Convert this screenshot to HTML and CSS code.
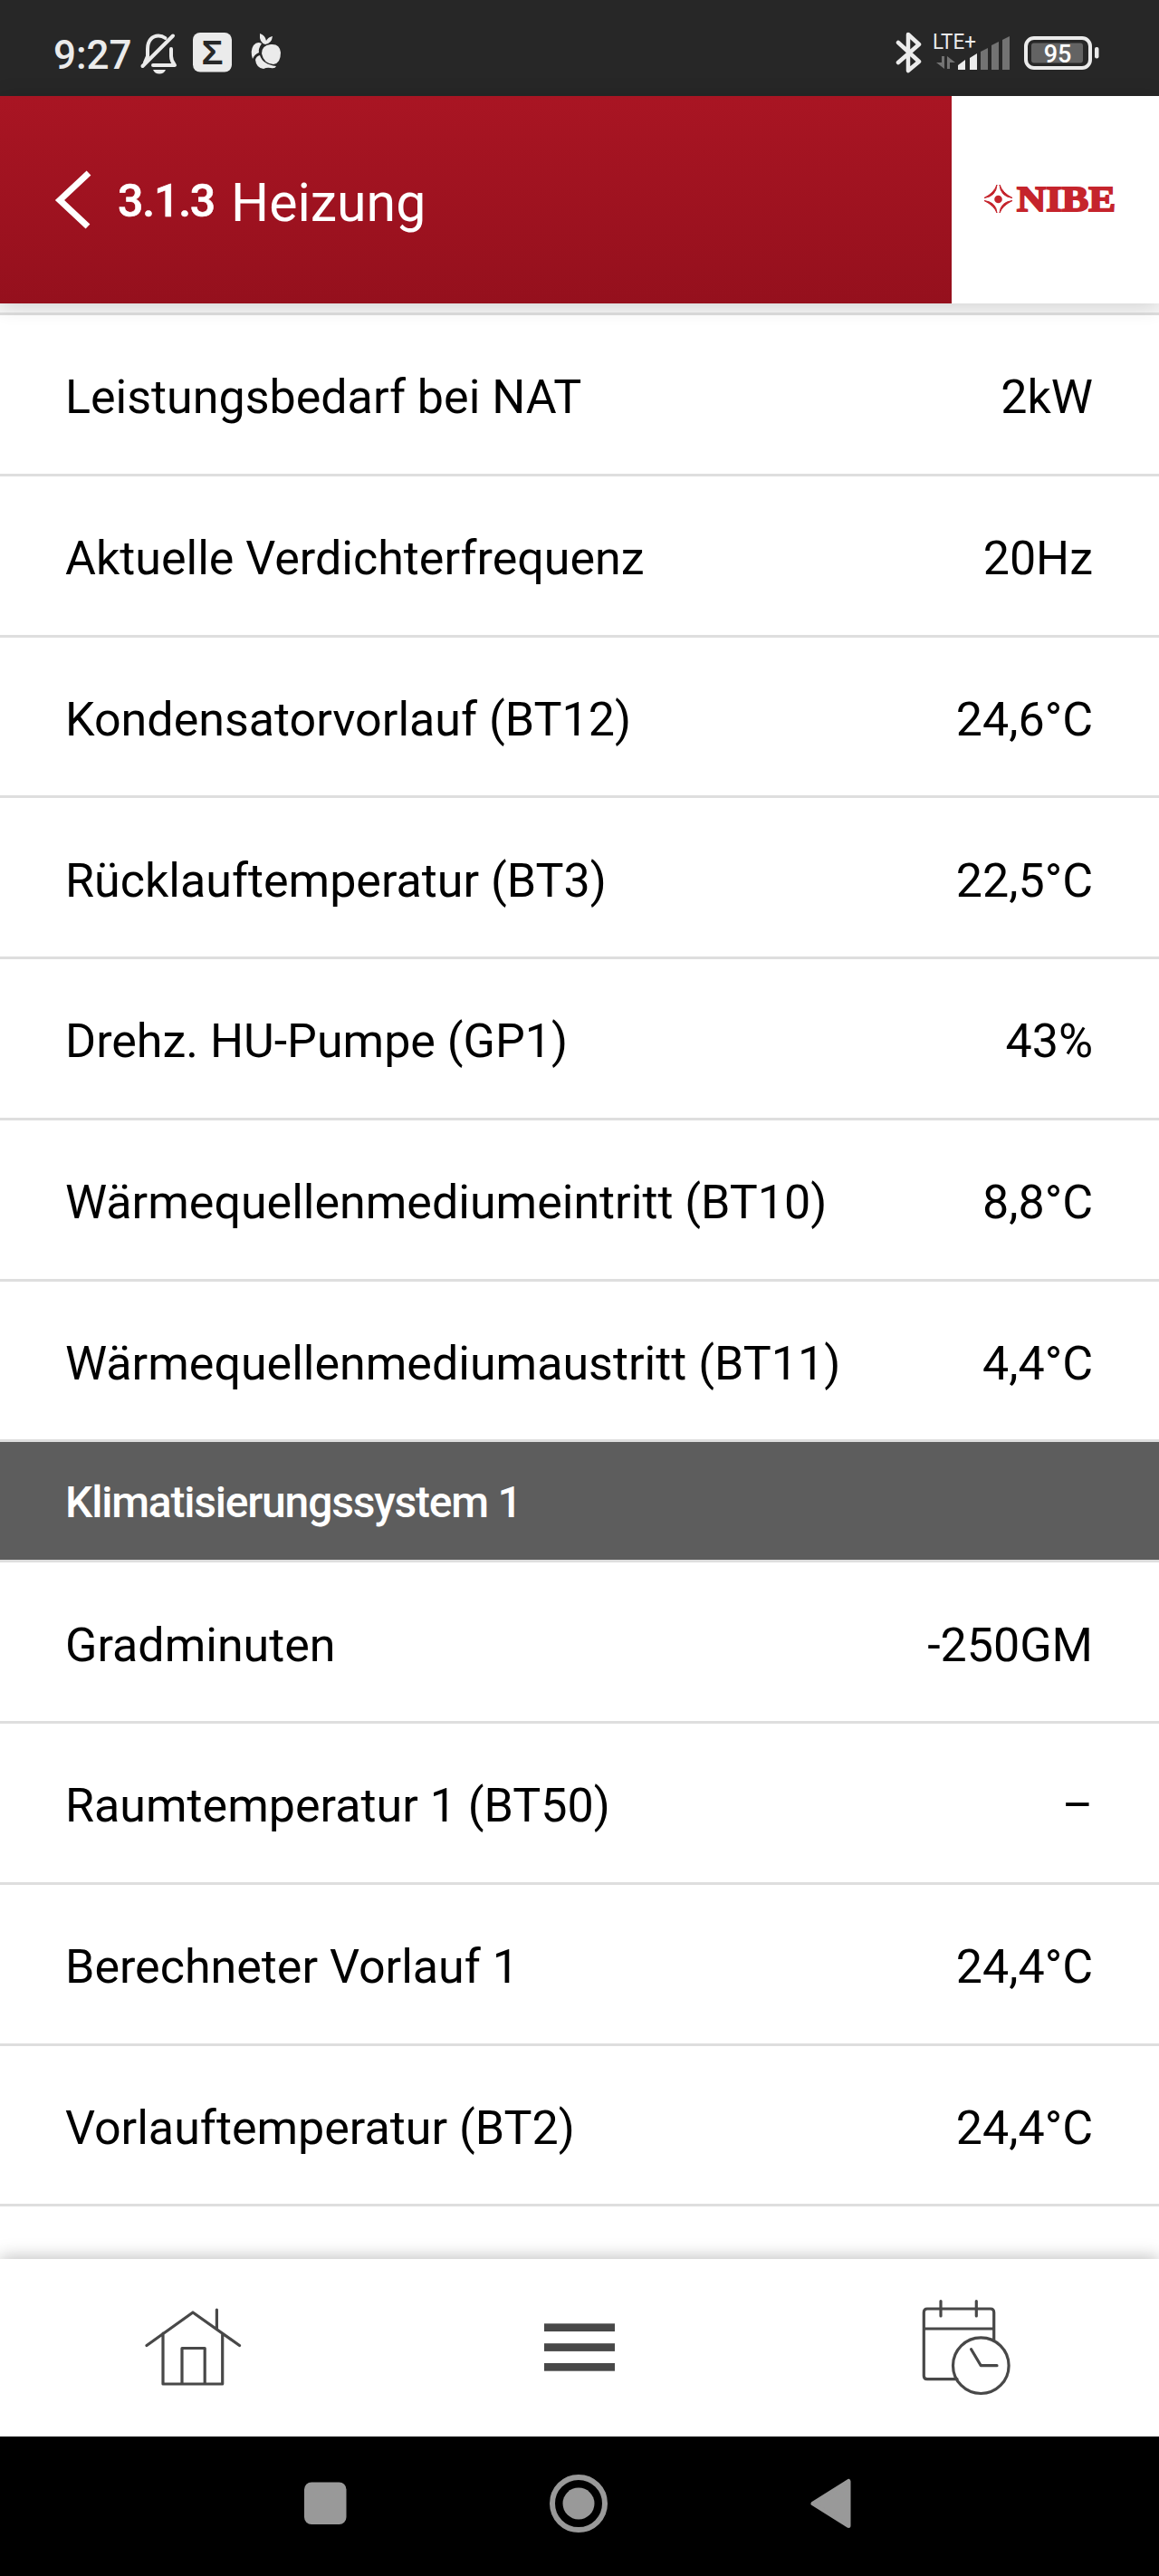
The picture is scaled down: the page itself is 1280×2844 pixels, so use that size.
FILE: index.html
```
<!DOCTYPE html>
<html lang="de">
<head>
  <meta charset="utf-8">
  <title>Heizung</title>
  <link rel="stylesheet" href="styles.css">
</head>
<body>
  <div class="status">
    <span class="clock">9:27</span>
    <svg class="bell" width="42" height="46" viewBox="0 0 42 46">
      <g fill="none" stroke="#ebebeb" stroke-width="4" stroke-linecap="round" stroke-linejoin="round">
        <path d="M8 25V18C8 9 13 3.500 20 3.500C23 3.500 25.500 4.500 27.500 6"/>
        <path d="M34 18V26Q34 31 38 36H14"/>
        <path d="M2.500 37L36 3.500"/>
        <path d="M8 20V26L5 33"/>
      </g>
      <path d="M14 41H28Q26 45.500 21 45.500T14 41z" fill="#ebebeb"/>
    </svg>
    <svg class="sigma" width="43" height="44" viewBox="0 0 43 44">
      <rect width="43" height="43.500" rx="8" fill="#ebebeb"/>
      <text x="21.500" y="35" textLength="24" lengthAdjust="spacingAndGlyphs">Σ</text>
    </svg>
    <svg class="apple" width="34" height="42" viewBox="0 0 34 42">
      <g fill="#ebebeb">
        <path d="M10 1Q16 3 17 9Q19 5 24 4Q23 12 16 13Q9 11 10 1z"/>
        <path d="M2 29Q-1 20 3 14Q7 9 12 12Q8 18 9 22Q4 24 2 29z"/>
        <path d="M22 13Q32 12 33 22Q33 34 25 35Q14 34 12 23Q12 14 22 13z"/>
        <path d="M5 30Q6 26 10 25Q13 35 28 37Q27 40 22 39Q18 38 14 40Q6 39 5 30z"/>
      </g>
    </svg>
    <svg class="bluetooth" width="32" height="48" viewBox="0 0 32 48">
      <path d="M4 13L27 34L15 44V4L27 15L4 35" fill="none" stroke="#ebebeb" stroke-width="4.500" stroke-linecap="round" stroke-linejoin="round"/>
    </svg>
    <svg class="signal" width="88" height="44" viewBox="0 0 88 44">
      <text x="0" y="19" textLength="48" lengthAdjust="spacingAndGlyphs">LTE+</text>
      <g fill="#737373">
        <path d="M10 27h3v14L4 34h6zM16 41V27l9 7h-6v7z"/>
        <path d="M53 42V22l8-4v24z"/>
        <path d="M65 42V15l8-4v31z"/>
        <path d="M77 42V9l8-4v37z"/>
      </g>
      <path d="M28 42v-5l8-6v11zM41 42V29l8-5v18z" fill="#ebebeb"/>
    </svg>
    <svg class="battery" width="84" height="38" viewBox="0 0 84 38">
      <rect x="2" y="2" width="71" height="33" rx="9" fill="none" stroke="#ebebeb" stroke-width="4"/>
      <rect x="8" y="7.500" width="57" height="22" rx="3" fill="#636363"/>
      <rect x="78" y="12" width="4.500" height="12.500" rx="2" fill="#ebebeb"/>
      <text x="37" y="28.500">95</text>
    </svg>
  </div>

  <div class="header">
    <div class="title">
      <svg class="back" width="44" height="66" viewBox="0 0 44 66">
        <path d="M37 3L5 33L36 62" fill="none" stroke="#fff" stroke-width="7"/>
      </svg>
      <span class="number">3.1.3</span>
      <span class="name">Heizung</span>
    </div>
    <div class="logo">
      <svg width="34" height="34" viewBox="0 0 34 34" fill="#c5242c">
        <path d="M15 1Q14 14 1 15.500Q12 10 15 1z" stroke="#c5242c"/>
        <path d="M18 1Q19 14 32 15.500Q21 10 18 1z" stroke="#c5242c"/>
        <path d="M15 32Q14 20 1 18.500Q12 24 15 32z" stroke="#c5242c"/>
        <path d="M18 32Q19 20 32 18.500Q21 24 18 32z" stroke="#c5242c"/>
        <circle cx="16.500" cy="17" r="4.300"/>
      </svg>
      <svg class="brand" width="116" height="50" viewBox="0 0 116 50">
        <text x="3" y="38.500" textLength="109" lengthAdjust="spacingAndGlyphs">NIBE</text>
      </svg>
    </div>
  </div>

  <div class="list">
    <div class="row"><span>Leistungsbedarf bei NAT</span><span>2kW</span></div>
    <div class="row"><span>Aktuelle Verdichterfrequenz</span><span>20Hz</span></div>
    <div class="row"><span>Kondensatorvorlauf (BT12)</span><span>24,6°C</span></div>
    <div class="row"><span>Rücklauftemperatur (BT3)</span><span>22,5°C</span></div>
    <div class="row"><span>Drehz. HU-Pumpe (GP1)</span><span>43%</span></div>
    <div class="row"><span>Wärmequellenmediumeintritt (BT10)</span><span>8,8°C</span></div>
    <div class="row"><span>Wärmequellenmediumaustritt (BT11)</span><span>4,4°C</span></div>
    <div class="section">Klimatisierungssystem 1</div>
    <div class="row"><span>Gradminuten</span><span>-250GM</span></div>
    <div class="row"><span>Raumtemperatur 1 (BT50)</span><span>–</span></div>
    <div class="row"><span>Berechneter Vorlauf 1</span><span>24,4°C</span></div>
    <div class="row"><span>Vorlauftemperatur (BT2)</span><span>24,4°C</span></div>
  </div>

  <div class="tabs">
    <div class="tab">
      <svg width="120" height="120" viewBox="0 0 120 120">
        <path d="M9 57.500L60 21L111.500 57.500M27 44V100H92.700V44M86.400 18V39M48 100V60.500H73.200V100"/>
      </svg>
    </div>
    <div class="tab">
      <svg class="menu" width="120" height="120" viewBox="0 0 120 120">
        <rect x="21" y="33.300" width="78" height="8.700"/>
        <rect x="21" y="55.200" width="78" height="8.700"/>
        <rect x="21" y="77" width="78" height="8.700"/>
      </svg>
    </div>
    <div class="tab">
      <svg width="120" height="120" viewBox="0 0 120 120">
        <path d="M50 94.700H17Q13.300 94.700 13.300 91V21Q13.300 17 17 17H87Q90.700 17 90.700 21V52M13.300 39H90.700M32 8.500V25M71.300 8.500V25"/>
        <circle cx="76.300" cy="79.700" r="30.800"/>
        <path d="M65.600 61.700L76.300 79.700H94"/>
      </svg>
    </div>
  </div>

  <div class="nav">
    <svg width="64" height="64" viewBox="0 0 64 64">
      <rect x="8" y="8.500" width="46.500" height="46.500" rx="8" fill="#999"/>
    </svg>
    <svg width="64" height="64" viewBox="0 0 64 64">
      <circle cx="32" cy="32" r="29" fill="none" stroke="#999" stroke-width="6"/>
      <circle cx="32" cy="32" r="17.500" fill="#999"/>
    </svg>
    <svg width="64" height="64" viewBox="0 0 64 64">
      <path d="M12 32L51 7.500V56.500z" fill="#999" stroke="#999" stroke-width="5" stroke-linejoin="round"/>
    </svg>
  </div>
</body>
</html>
```
FILE: styles.css
```
body {
  margin: 0;
  height: 2844px;
  display: flex;
  flex-direction: column;
  overflow: hidden;
  background: #fff;
  color: #000;
  font-family: Roboto, sans-serif;
}
svg {
  display: block;
  flex: none;
  overflow: visible;
}

/* system bar */
.status {
  height: 106px;
  box-sizing: border-box;
  padding: 34px 65px 0 59px;
  display: flex;
  align-items: flex-start;
  background: #272727;
  color: #ebebeb;
}
.clock {
  width: 96px;
  font-size: 44px;
  line-height: 54px;
  font-weight: 500;
}
.bell {
  margin-top: 2px;
}
.sigma {
  margin: 2px 0 0 16px;
}
.sigma text {
  font: bold 37px "Liberation Sans", sans-serif;
  text-anchor: middle;
  fill: #272727;
}
.apple {
  margin: 2px 0 0 21px;
}
.bluetooth {
  margin: 0 10px 0 auto;
}
.signal {
  margin: 1px 13px 0 0;
}
.signal text {
  font-size: 24px;
  fill: #ebebeb;
}
.battery {
  margin-top: 6px;
}
.battery text {
  font-size: 27px;
  font-weight: 500;
  text-anchor: middle;
  fill: #fff;
}

/* title bar */
.header {
  height: 229px;
  display: flex;
  flex: none;
  position: relative;
  box-shadow: 0 2px 22px rgba(0, 0, 0, 0.16);
}
.title {
  width: 1051px;
  display: flex;
  align-items: flex-start;
  background: linear-gradient(#a91523, #95101d);
  color: #fff;
}
.back {
  margin: 82px 0 0 61px;
}
.number {
  margin-left: 25px;
  font-size: 50px;
  font-weight: 500;
  line-height: 232px;
  letter-spacing: -1.2px;
  -webkit-text-stroke: 0.6px #fff;
}
.name {
  margin-left: 18px;
  font-size: 59px;
  line-height: 235px;
}
.logo {
  flex: 1;
  box-sizing: border-box;
  padding: 97px 0 0 35px;
  display: flex;
  align-items: flex-start;
  background: #fff;
}
.brand {
  margin-top: -9px;
}
.brand text {
  font: bold 40px "Liberation Serif", serif;
  fill: #c5242c;
  stroke: #c5242c;
  stroke-width: 2px;
}

/* values */
.list {
  flex: 1;
  min-height: 0;
  border-top: 10px solid #f6f6f6;
}
.list::before {
  content: "";
  display: block;
  height: 3px;
  background: #dedede;
}
.row {
  height: 177.75px;
  box-sizing: border-box;
  padding: 7px 73px 0 72px;
  border-bottom: 3.5px solid #dedede;
  display: flex;
  justify-content: space-between;
  align-items: center;
  font-size: 52px;
}
.section {
  height: 133px;
  box-sizing: border-box;
  padding: 3px 73px 0 72px;
  border-bottom: 3.5px solid #dedede;
  display: flex;
  align-items: center;
  background: #5d5d5d;
  background-clip: padding-box;
  color: #fff;
  font-size: 48px;
  font-weight: 500;
  letter-spacing: -1.2px;
}

/* bottom tabs */
.tabs {
  height: 196px;
  flex: none;
  display: flex;
  position: relative;
  background: #fff;
  box-shadow: 0 -2px 18px rgba(0, 0, 0, 0.25);
}
.tab {
  flex: 1;
  display: flex;
  align-items: center;
  justify-content: center;
}
.tab svg {
  fill: none;
  stroke: #484848;
  stroke-width: 3.2px;
  stroke-linecap: round;
  stroke-linejoin: round;
}
.tab .menu {
  fill: #484848;
  stroke: none;
}

/* android buttons */
.nav {
  height: 154px;
  flex: none;
  box-sizing: border-box;
  padding: 0 3px 7px 0;
  display: flex;
  align-items: center;
  justify-content: center;
  gap: 215px;
  background: #000;
  position: relative;
}
```
